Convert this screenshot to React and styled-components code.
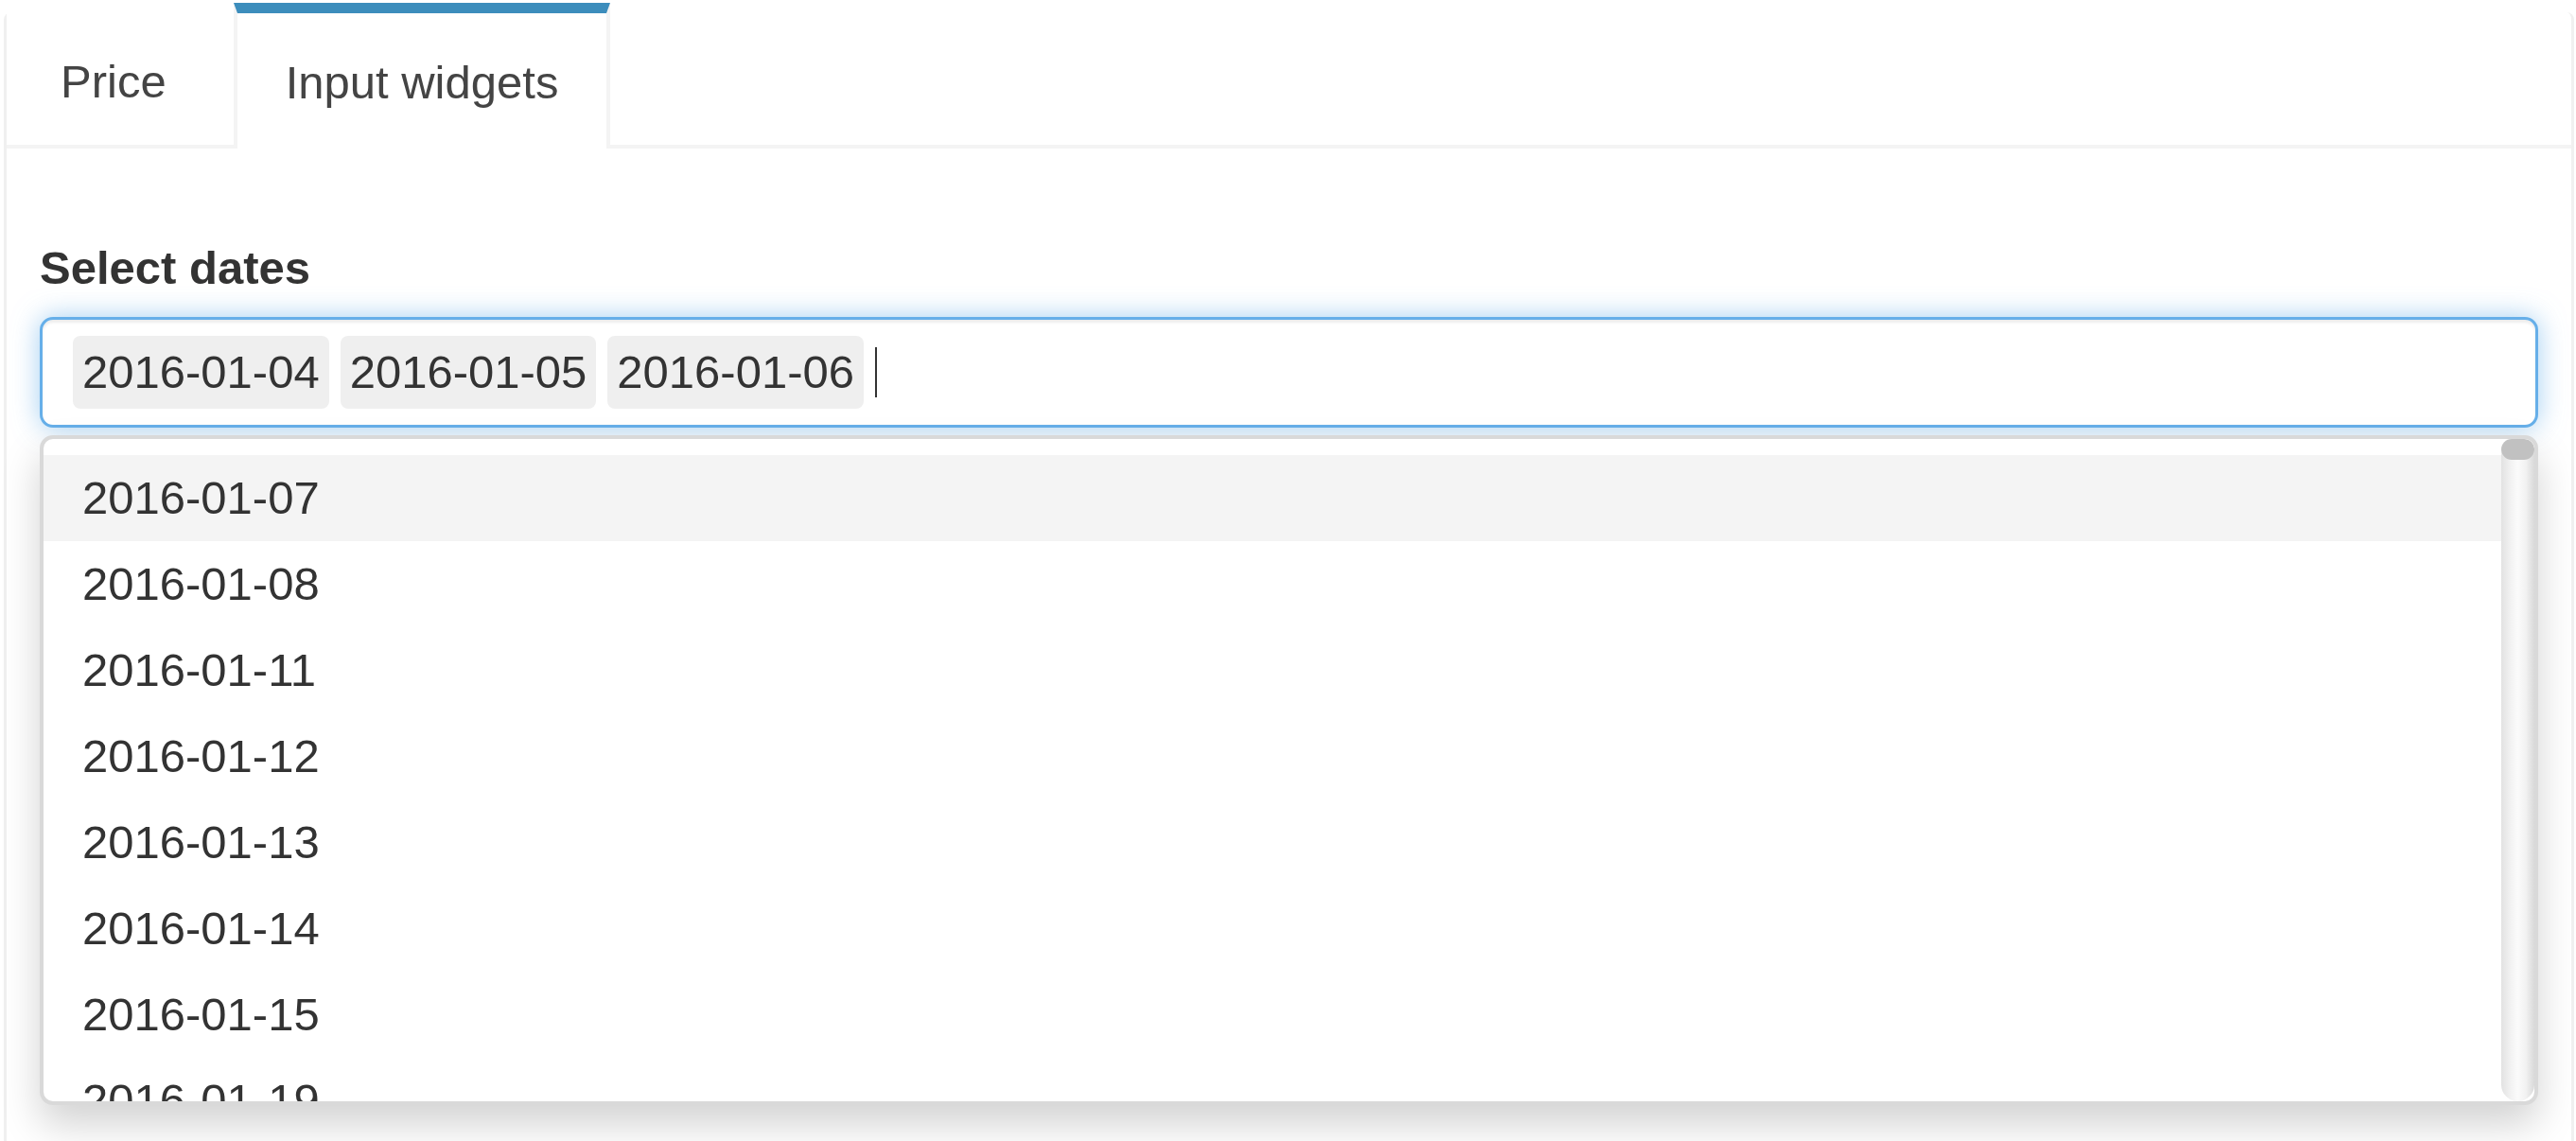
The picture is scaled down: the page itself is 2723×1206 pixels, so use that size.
import React from 'react'
import styled, {createGlobalStyle} from 'styled-components'

const GlobalStyle = createGlobalStyle`
  html, body {
    margin: 0;
    background: #fff;
  }
  body {
    font-family: "Liberation Sans", Arial, Helvetica, sans-serif;
    overflow: hidden;
  }
`

const HOLIDAYS = ['2016-01-18', '2016-02-15', '2016-03-25', '2016-05-30', '2016-07-04', '2016-09-05', '2016-11-24', '2016-12-26']

function tradingDays(from, to) {
  const out = []
  const d = new Date(from + 'T00:00:00Z')
  const end = new Date(to + 'T00:00:00Z')
  while (d <= end) {
    const wd = d.getUTCDay()
    const s = d.toISOString().slice(0, 10)
    if (wd !== 0 && wd !== 6 && !HOLIDAYS.includes(s)) out.push(s)
    d.setUTCDate(d.getUTCDate() + 1)
  }
  return out
}

const SELECTED = ['2016-01-04', '2016-01-05', '2016-01-06']
const OPTIONS = tradingDays('2016-01-07', '2016-12-30')

const LIST_HEIGHT = 700
const ROW_HEIGHT = 91
const LIST_PAD = 17
// only the rows that fit in the open list get rendered
const VISIBLE_ROWS = 8

const Page = styled.div`
  box-sizing: border-box;
  height: 1206px;
  padding: 13px 2px 0 4px;
`

const Panel = styled.div`
  height: 100%;
  background: #fff;
  border-left: 3px solid #f0f0f0;
  border-right: 3px solid #f0f0f0;
  border-radius: 8px 8px 0 0;
`

const TabNav = styled.ul`
  display: flex;
  margin: 0;
  padding: 0;
  list-style: none;
  border-bottom: 4px solid #f4f4f4;
`

const Tab = styled.li`
  box-sizing: border-box;
  display: flex;
  align-items: center;
  font-size: 49px;
  color: #444;
  background: #fff;
  white-space: nowrap;
  ${(p) => p.$active ? `
    height: 154px;
    margin: -10px 0 -4px;
    padding: 2px 51px 0;
    border-top: 11px solid #3c8dbc;
    border-left: 4px solid #f4f4f4;
    border-right: 4px solid #f4f4f4;
  ` : `
    height: 140px;
    margin-right: 14px;
    padding: 6px 57px 0;
  `}
`

const TabContent = styled.div`
  padding: 91px 35px 0;
`

const Label = styled.label`
  display: block;
  margin-bottom: 17px;
  font-size: 49px;
  line-height: 70px;
  font-weight: 700;
  color: #333;
`

const SelectWrap = styled.div`
  position: relative;
`

const Control = styled.div`
  box-sizing: border-box;
  display: flex;
  align-items: center;
  gap: 12px;
  height: 117px;
  padding: 0 32px;
  background: #fff;
  border: 3px solid #66afe9;
  border-radius: 14px;
  box-shadow: inset 0 3px 3px rgba(0, 0, 0, 0.075), 0 0 28px rgba(102, 175, 233, 0.6);
`

const Tag = styled.div`
  height: 77px;
  padding: 0 10px;
  line-height: 77px;
  font-size: 49px;
  color: #333;
  background: #efefef;
  border-radius: 8px;
`

const Caret = styled.span`
  width: 2px;
  height: 53px;
  background: #333;
`

const Dropdown = styled.div`
  position: absolute;
  top: calc(100% + 8px);
  left: 0;
  right: 0;
  display: flex;
  height: ${LIST_HEIGHT}px;
  overflow: hidden;
  background: #fff;
  border: 4px solid #d9d9d9;
  border-radius: 14px;
  box-shadow: 0 21px 42px rgba(0, 0, 0, 0.175);
`

const OptionList = styled.div`
  flex: 1;
  padding: ${LIST_PAD}px 0;
  overflow: hidden;
`

const Option = styled.div`
  height: ${ROW_HEIGHT}px;
  box-sizing: border-box;
  padding: 10px 41px 11px;
  line-height: 70px;
  font-size: 49px;
  color: #333;
  background: ${(p) => p.$active ? '#f4f4f4' : 'transparent'};
`

const ScrollTrack = styled.div`
  width: 35px;
  border-radius: 18px;
  background: linear-gradient(to right, #e2e2e2 0%, #f3f3f3 30%, #fbfbfb 50%, #f1f1f1 75%, #d9d9d9 100%);
`

const ScrollThumb = styled.div`
  width: 100%;
  background: #c1c1c1;
  border-radius: 18px;
`

export default function App() {
  const contentHeight = OPTIONS.length * ROW_HEIGHT + LIST_PAD * 2
  const thumbHeight = Math.max(20, (LIST_HEIGHT * LIST_HEIGHT) / contentHeight)

  return (
    <>
      <GlobalStyle />
      <Page>
        <Panel>
          <TabNav>
            <Tab>Price</Tab>
            <Tab $active>Input widgets</Tab>
          </TabNav>
          <TabContent>
            <Label>Select dates</Label>
            <SelectWrap>
              <Control>
                {SELECTED.map((d) => <Tag key={d}>{d}</Tag>)}
                <Caret />
              </Control>
              <Dropdown>
                <OptionList>
                  {OPTIONS.slice(0, VISIBLE_ROWS).map((d, idx) => (
                    <Option key={d} $active={idx === 0}>{d}</Option>
                  ))}
                </OptionList>
                <ScrollTrack>
                  <ScrollThumb style={{height: thumbHeight}} />
                </ScrollTrack>
              </Dropdown>
            </SelectWrap>
          </TabContent>
        </Panel>
      </Page>
    </>
  )
}
